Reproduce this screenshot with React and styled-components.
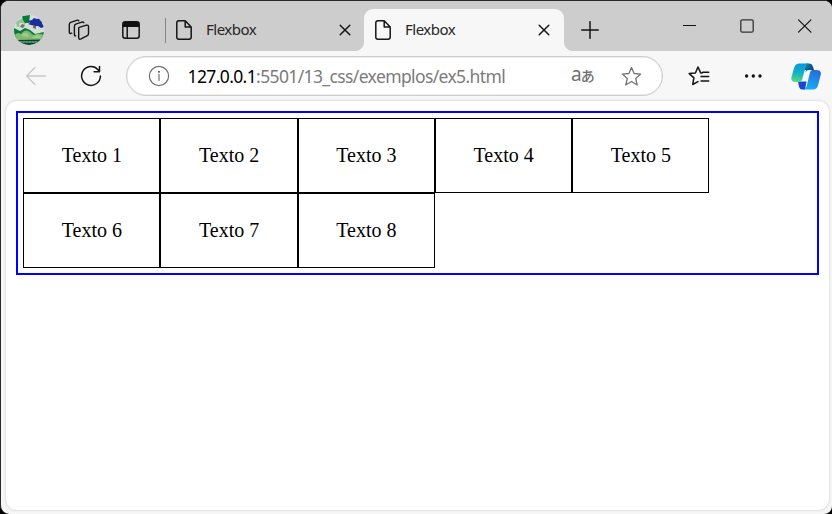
import React from "react";
import styled, { createGlobalStyle, css } from "styled-components";

const GlobalStyle = createGlobalStyle`
  * { box-sizing: border-box; }
  body { margin: 0; background: #000; overflow: hidden; }
`;

const uiFont = css`
  font-family: "Noto Sans", "Open Sans", sans-serif;
  white-space: nowrap;
`;

const Window = styled.div`
  width: 832px;
  height: 514px;
  display: flex;
  flex-direction: column;
  background: #f7f7f7;
  border: 1px solid #2b282b;
  border-width: 1px 0 0 1px;
  border-radius: 9px 8px 8px 9px;
  overflow: hidden;
`;

const TitleBar = styled.header`
  height: 50px;
  flex: none;
  display: flex;
  align-items: stretch;
  background: #cdcdcd;
`;

const Leading = styled.div`
  width: 164px;
  display: flex;
  align-items: center;
  padding: 8px 0 0 13px;
`;

const Icon = styled.svg`
  display: block;
  flex: none;
  width: ${(p) => p.$w}px;
  height: ${(p) => p.$h || p.$w}px;
  margin-left: ${(p) => p.$gap || 0}px;
  fill: none;
  stroke: ${(p) => p.$color || "#151515"};
  stroke-width: ${(p) => p.$stroke || 1.4};
  stroke-linecap: round;
  stroke-linejoin: round;
`;

const Divider = styled.span`
  width: 1px;
  height: 25px;
  margin-top: 17px;
  background: #858585;
`;

const Tab = styled.div`
  width: ${(p) => (p.$active ? 200 : 198)}px;
  height: 42px;
  margin-top: 8px;
  padding: ${(p) => (p.$active ? "0 14px 0 11px" : "0 13px 0 10px")};
  display: flex;
  align-items: center;
  position: relative;
  border-radius: 9px 9px 0 0;
  ${(p) =>
    p.$active &&
    css`
      background: #f7f7f7;
      &::before,
      &::after {
        content: "";
        position: absolute;
        bottom: 0;
        width: 8px;
        height: 8px;
      }
      &::before {
        left: -8px;
        background: radial-gradient(circle at 0 0, transparent 7.5px, #f7f7f7 8px);
      }
      &::after {
        right: -8px;
        background: radial-gradient(circle at 100% 0, transparent 7.5px, #f7f7f7 8px);
      }
    `}
`;

const TabTitle = styled.span`
  ${uiFont}
  flex: 1;
  margin-left: 14px;
  padding-bottom: 2px;
  font-size: 15px;
  line-height: 20px;
  letter-spacing: -0.5px;
  color: #262626;
`;

const NewTab = styled.div`
  display: flex;
  align-items: center;
  padding: 7px 0 0 17px;
`;

const WindowControls = styled.div`
  display: flex;
  align-items: center;
  margin-left: auto;
  padding-right: 20px;
`;

const Toolbar = styled.nav`
  height: 50px;
  flex: none;
  display: flex;
  align-items: center;
  padding-left: 24px;
`;

const AddressBar = styled.div`
  width: 537px;
  height: 40px;
  margin-left: 24px;
  padding-left: 20.5px;
  display: flex;
  align-items: center;
  background: #fff;
  border: 1px solid #cdcdcd;
  border-radius: 20px;
  box-shadow: inset 0 0 0 0.5px #dedede;
`;

const Url = styled.span`
  ${uiFont}
  width: 365px;
  margin-left: 18px;
  font-size: 17.5px;
  line-height: 24px;
  letter-spacing: -0.62px;
  color: #7b7b7b;
`;

const Host = styled.span`
  color: #000;
`;

const Translate = styled.span`
  width: 23px;
  display: flex;
  align-items: baseline;
  margin: -4px 0 0 18.5px;
  font: 19px/24px "Noto Sans", sans-serif;
  color: #707070;
`;

const Kana = styled.span`
  font: 500 14px/20px "Noto Sans CJK JP", sans-serif;
  margin-left: -1px;
`;

const Page = styled.main`
  width: 823px;
  height: 409px;
  margin-left: 5px;
  padding: 10px;
  background: #fff;
  border-radius: 11px;
  box-shadow: 0 0 3px 0 #c8c8c8;
`;

const FlexContainer = styled.section`
  width: 803px;
  display: flex;
  flex-wrap: wrap;
  border: 2px solid #00f;
  padding: 5px;
`;

const FlexItem = styled.div`
  width: 137.26px;
  height: 75px;
  display: flex;
  align-items: center;
  justify-content: center;
  padding-left: 0.6px;
  border: 1px solid #000;
  font: 20px/23px "Liberation Serif", "Times New Roman", serif;
  color: #000;
`;

const Avatar = () => (
  <Icon $w={30} viewBox="0 0 30 30" $color="none">
    <defs>
      <clipPath id="avatarClip"><circle cx="15" cy="15" r="15" /></clipPath>
    </defs>
    <g clipPath="url(#avatarClip)">
      <path fill="#d3e0da" d="M0 0h30v30H0z" />
      <path fill="#8fc49c" d="M2 7l8-5 4 4-5 5-6 1z" />
      <path fill="#087b39" d="M8 1l8-1-1 8-4 0-2-3z" />
      <path fill="#e4d7bc" d="M5 8l5 0 1 4-5 1zM16 9l7 1-1 4-5-1z" />
      <path fill="#777267" d="M8 9l3 1-2 3-3-1zM19 11l3 0v3l-3-1z" />
      <path fill="#182e9b" d="M14 6l4-1 2-2 3 1 3-1 0 2 4 1-2 2 2 4-3 1-3-2-3 0-4-1-3-1 2-1z" />
      <path fill="#08783b" d="M0 13l6 3 5-3 5 2 5 4 9-2v7H0z" />
      <path fill="#7fb974" d="M0 21q3-5 7-2 4-6 9-2 2 3 4 3 5-3 10 0v6H0z" />
      <path fill="#a1cc86" d="M7 21c2-4 7-4 8 1zM18 23c2-3 7-4 10 0z" />
      <path fill="#06472e" d="M2 25l27-.5-3 6H5z" />
      <path stroke="#b5d9ae" strokeWidth="1" d="M6 27h17" strokeDasharray="2 1" />
    </g>
  </Icon>
);

const WorkspacesIcon = () => (
  <Icon $w={22} $gap={24} viewBox="0 0 22 22">
    <path d="M11.3 8.3 18.5 6.2q2-.5 2 1.2v7.3q0 1.3-1.2 1.9l-6.2 3.2q-2.4 1.1-2.4-1V9.3q0-.8.6-1z" />
    <path d="M7.6 16.8c-1 .2-1.2-.3-1.2-1.3V7.2q0-1.5 1.4-2l6-2.1q1.500-.5 2 .6" />
    <path d="M3.800 14.200c-1.900.7-2.500 0-2.500-1.300V5.400q0-1.400 1.400-2l6-2.100q1.500-.5 2.200.5" />
  </Icon>
);

const TabActionsIcon = () => (
  <Icon $w={18} $gap={32} viewBox="0 0 18 18" $stroke={1.5}>
    <rect x=".8" y=".8" width="16.4" height="16.4" rx="2.5" />
    <path fill="#111" stroke="none" d="M1 6V3q0-2 2-2h12q2 0 2 2v3z" />
    <path d="M5.2 6v11" />
  </Icon>
);

const DocumentIcon = () => (
  <Icon $w={16} $h={20} viewBox="0 0 16 20" $stroke={1.5}>
    <path d="M3 .8h6.2L15.2 7v10q0 2.2-2.2 2.2H3Q.8 19.2.8 17V3Q.8.8 3 .8zM9.2.8V7h6" />
  </Icon>
);

const CloseIcon = () => (
  <Icon $w={12} viewBox="0 0 12 12" $stroke={1.5}>
    <path d="m1.2 1.2 9.6 9.6m0-9.6-9.6 9.6" />
  </Icon>
);

const BrowserTab = ({ title, active }) => (
  <Tab $active={active}>
    <DocumentIcon />
    <TabTitle>{title}</TabTitle>
    <CloseIcon />
  </Tab>
);

const starPath = "M10.5 1.5l2.6 6 6.6.6-5 4.4 1.5 6.5-5.7-3.5L4.8 19l1.5-6.5-5-4.4 6.6-.6z";

const CopilotIcon = () => (
  <Icon $w={30} $h={27} $gap={29} viewBox="0 0 30 27" $color="none">
    <defs>
      <linearGradient id="cpLeft" x1=".5" x2=".4" y2="1">
        <stop stopColor="#0a98dc" /><stop offset=".5" stopColor="#10b0c8" /><stop offset="1" stopColor="#5cd87c" />
      </linearGradient>
      <linearGradient id="cpFold" x2="1" y2=".5">
        <stop stopColor="#0b8fbd" /><stop offset="1" stopColor="#0a4a80" />
      </linearGradient>
      <linearGradient id="cpRight" x1=".7" x2=".4" y2="1">
        <stop stopColor="#2a68da" /><stop offset=".5" stopColor="#208ce8" /><stop offset="1" stopColor="#14aef5" />
      </linearGradient>
    </defs>
    <path fill="url(#cpFold)" d="M15 .5h3.500q2.500 0 3.300 2.700L23 7H13z" />
    <path fill="#1848d0" d="M7 18.500h8.500L14 26.500h-3q-2.300 0-3-2.700z" />
    <path fill="url(#cpLeft)" d="M8.500.5h9q-2.200.7-3 3.500L11.300 16q-.9 3-3.600 3H4.500Q-.8 19 .6 13.500L3.200 4.500Q4.500.5 8.500.5z" />
    <path fill="url(#cpRight)" d="M21.500 7H25q6.200 0 4.600 5.500L27 22.500q-1.200 4-5 4h-9.500q2.400-.6 3.200-3.500l3-12.500Q19.500 7 21.500 7z" />
    <path fill="#0da3cf" d="M15.500 5.500 14 11q1-4 4.500-4H15z" />
  </Icon>
);

const items = Array.from({ length: 8 }, (_, i) => `Texto ${i + 1}`);

export default function App() {
  return (
    <>
      <GlobalStyle />
      <Window>
        <TitleBar>
          <Leading>
            <Avatar />
            <WorkspacesIcon />
            <TabActionsIcon />
          </Leading>
          <Divider />
          <BrowserTab title="Flexbox" />
          <BrowserTab title="Flexbox" active />
          <NewTab>
            <Icon $w={18} viewBox="0 0 18 18" $stroke={1.5}><path d="M9 .7v16.6M.7 9h16.6" /></Icon>
          </NewTab>
          <WindowControls>
            <Icon $w={13} $h={14} viewBox="0 0 13 14" $stroke={1}><path d="M0 6.5h13" /></Icon>
            <Icon $w={14} $gap={44} viewBox="0 0 14 14" $stroke={1.3} $color="#333"><rect x=".8" y=".8" width="12.4" height="12.4" rx="1.5" /></Icon>
            <Icon $w={14} $gap={44} viewBox="0 0 14 14" $stroke={1.2}><path d="m.5.8 12.4 12.4m0-12.4L.5 13.2" /></Icon>
          </WindowControls>
        </TitleBar>
        <Toolbar>
          <Icon $w={22} viewBox="0 0 22 22" $color="#c9c9c9"><path d="M20.5 11H1.5M10 2.5 1.5 11l8.5 8.5" /></Icon>
          <Icon $w={22} $gap={33} viewBox="0 0 22 22" $stroke={1.5}><path d="M20.4 11A9.4 9.4 0 1 1 18 4.7l1.5 2M19.5 1.5v5.3h-5.4" /></Icon>
          <AddressBar>
            <Icon $w={22} viewBox="0 0 22 22" $color="#707070" $stroke={1.2}>
              <circle cx="11" cy="11" r="9.6" /><path d="M11 9.5v6" /><circle cx="11" cy="6.8" r=".5" fill="#707070" />
            </Icon>
            <Url><Host>127.0.0.1</Host>:5501/13_css/exemplos/ex5.html</Url>
            <Translate>a<Kana>あ</Kana></Translate>
            <Icon $w={21} $gap={27} viewBox="0 0 21 21" $color="#757575" $stroke={1.3}><path d={starPath} /></Icon>
          </AddressBar>
          <Icon $w={22} $gap={25} viewBox="0 0 22 22" $stroke={1.5}>
            <path d="M14 8.1l-1.3-.2L10 2 7.4 8l-6.2.6 4.7 4.3L4.7 19.5 10 16.6M14.7 7.2h6M13 11.5h7.7M13 16h7.7" />
          </Icon>
          <Icon $w={18} $h={4} $gap={34} viewBox="0 0 18 4" $color="none">
            <circle cx="2.6" cy="2" r="1.7" fill="#111" /><circle cx="9.3" cy="2" r="1.7" fill="#111" /><circle cx="16" cy="2" r="1.7" fill="#111" />
          </Icon>
          <CopilotIcon />
        </Toolbar>
        <Page>
          <FlexContainer>
            {items.map((text) => <FlexItem key={text}>{text}</FlexItem>)}
          </FlexContainer>
        </Page>
      </Window>
    </>
  );
}
